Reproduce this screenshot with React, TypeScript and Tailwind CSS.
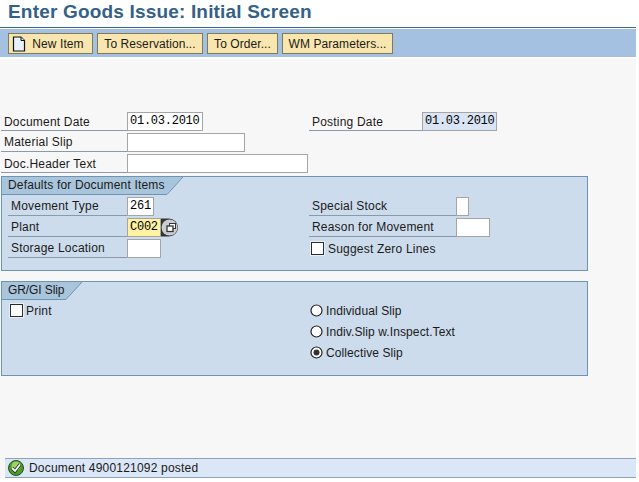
import type { ReactNode } from 'react';

const Field = ({ value = '', width, tone = 'bg-white' }: { value?: string; width: string; tone?: string }) => (
  <div className={`${width} ${tone} h-[19px] shrink-0 border border-[#a5a5a5] pl-[2px] font-['Liberation_Mono'] text-[12px] leading-[16px] tracking-[-0.25px] text-black`}>
    {value}
  </div>
);

const Row = ({ label, labelWidth, leading = 'leading-[20px]', children }: { label: string; labelWidth: string; leading?: string; children?: ReactNode }) => (
  <div className="flex h-[19px] items-start">
    <div className={`${labelWidth} ${leading} h-[19px] shrink-0 whitespace-nowrap border-b border-[#8a9aa8] pl-[3px] text-[12px] tracking-[0.2px] text-[#1a1a1a]`}>
      {label}
    </div>
    {children}
  </div>
);

const Checkbox = () => <div className="h-[13px] w-[13px] shrink-0 border border-[#2c2c2c] bg-white shadow-[0_0_0_1px_#e8eef5]" />;

const Radio = ({ checked = false }: { checked?: boolean }) => (
  <svg width="13" height="13" viewBox="0 0 13 13" className="shrink-0">
    <circle cx="6.5" cy="6.5" r="5.5" fill="#fff" stroke="#222" strokeWidth="1.2" />
    {checked && <circle cx="6.5" cy="6.5" r="3" fill="#333" />}
  </svg>
);

const Option = ({ label, checked }: { label: string; checked?: boolean }) => (
  <div className="flex h-[21px] items-center gap-[3px] pl-[1px] text-[12px] tracking-[0.1px] text-[#1a1a1a]">
    <Radio checked={checked} />
    <span>{label}</span>
  </div>
);

const ToolButton = ({ children, className }: { children: ReactNode; className: string }) => (
  <button className={`${className} flex h-[21px] items-center justify-center border border-[#7f7a5d] bg-[#f9e6ae] text-[12px] tracking-[0.08px] text-[#1a1a1a]`}>
    {children}
  </button>
);

const GroupTab = ({ title, className }: { title: string; className: string }) => (
  <div className="flex h-[18px] items-start">
    <div className={`${className} h-[18px] whitespace-nowrap border-b border-[#6f93b3] bg-[#a9c5dc] pl-[6px] text-[12px] leading-[16px] text-[#1a1a1a]`}>
      {title}
    </div>
    <svg width="17" height="18" viewBox="0 0 17 18" className="shrink-0">
      <polygon points="0,0 16,0 0,17" fill="#a9c5dc" />
      <line x1="0" y1="17.5" x2="16" y2="0" stroke="#6f93b3" />
    </svg>
  </div>
);

export default function App() {
  return (
    <div className="h-[482px] w-[639px] bg-white font-['Liberation_Sans',Arial,sans-serif]">
      <div className="flex h-[478px] w-[636px] flex-col bg-[#f7f7f7]">
        <div className="h-[28px] border-b border-[#3d6a85] bg-white pl-[8px] text-[19px] font-bold leading-[24px] tracking-[0.18px] text-[#346187]">
          Enter Goods Issue: Initial Screen
        </div>
        <div className="h-[1px] bg-white" />
        <div className="flex h-[28px] items-start gap-[4px] bg-[#a5c1e1] pl-[8px] pt-[4px]">
          <ToolButton className="w-[85px] pr-[5px]">
            <svg width="14" height="16" viewBox="0 0 14 16" className="mr-[6px] shrink-0">
              <path d="M1.5 1 H9 L12.5 4.5 V15 H1.5 Z" fill="#e8f1fa" stroke="#111" strokeWidth="1.2" />
              <path d="M9 1 V4.5 H12.5" fill="#cfe0f0" stroke="#111" />
            </svg>
            New Item
          </ToolButton>
          <ToolButton className="w-[106px]">To Reservation...</ToolButton>
          <ToolButton className="w-[71px]">To Order...</ToolButton>
          <ToolButton className="w-[111px]">WM Parameters...</ToolButton>
        </div>
        <div className="h-[2px] bg-white" />

        <div className="flex flex-col gap-[2px] pl-[1px] pt-[53px]">
          <div className="flex h-[19px]">
            <Row label="Document Date" labelWidth="w-[126px]">
              <Field value="01.03.2010" width="w-[76px]" />
            </Row>
            <div className="ml-[106px]">
              <Row label="Posting Date" labelWidth="w-[113px]">
                <Field value="01.03.2010" width="w-[75px]" tone="bg-[#d9e4f5]" />
              </Row>
            </div>
          </div>
          <Row label="Material Slip" labelWidth="w-[126px]" leading="leading-[19px]">
            <Field width="w-[118px]" />
          </Row>
          <Row label="Doc.Header Text" labelWidth="w-[126px]">
            <Field width="w-[181px]" />
          </Row>
        </div>

        <div className="ml-[1px] mt-[3px] h-[95px] w-[587px] border border-[#6f93b3] bg-[#cddcec]">
          <GroupTab title="Defaults for Document Items" className="w-[165px] tracking-[0.17px]" />
          <div className="flex pl-[6px] pt-[2px]">
            <div className="flex w-[300px] flex-col gap-[2px]">
              <Row label="Movement Type" labelWidth="w-[119px]" leading="leading-[18px]">
                <Field value="261" width="w-[27px]" />
              </Row>
              <Row label="Plant" labelWidth="w-[119px]" leading="leading-[18px]">
                <Field value="C002" width="w-[34px]" tone="bg-[#fff3a0]" />
                <svg width="18" height="19" viewBox="0 0 18 19" className="shrink-0">
                  <path d="M8 0.5 A9 9 0 0 1 8 18.5 H0 V0.5 Z" fill="#333" />
                  <circle cx="8.5" cy="9.5" r="8" fill="#c9ccd0" />
                  <rect x="8.5" y="5.5" width="6" height="5" fill="#fff" stroke="#333" />
                  <rect x="6" y="8" width="6" height="5.5" fill="#fff" stroke="#333" strokeWidth="1.3" />
                </svg>
              </Row>
              <Row label="Storage Location" labelWidth="w-[119px]" leading="leading-[18px]">
                <Field width="w-[34px]" />
              </Row>
            </div>
            <div className="flex flex-col gap-[2px] pl-[1px]">
              <Row label="Special Stock" labelWidth="w-[147px]" leading="leading-[18px]">
                <Field width="w-[13px]" />
              </Row>
              <Row label="Reason for Movement" labelWidth="w-[147px]" leading="leading-[18px]">
                <Field width="w-[34px]" />
              </Row>
              <div className="flex h-[19px] items-center gap-[4px] pl-[2px] text-[12px] tracking-[0.2px] text-[#1a1a1a]">
                <Checkbox />
                <span>Suggest Zero Lines</span>
              </div>
            </div>
          </div>
        </div>

        <div className="ml-[1px] mt-[10px] h-[95px] w-[587px] border border-[#6f93b3] bg-[#cddcec]">
          <GroupTab title="GR/GI Slip" className="w-[64px] tracking-[-0.1px]" />
          <div className="flex pl-[8px] pt-[1px]">
            <div className="flex h-[19px] w-[299px] items-center gap-[3px] text-[12px] tracking-[0.2px] text-[#1a1a1a]">
              <Checkbox />
              <span>Print</span>
            </div>
            <div className="-mt-[1px] flex flex-col">
              <Option label="Individual Slip" />
              <Option label="Indiv.Slip w.Inspect.Text" />
              <Option label="Collective Slip" checked />
            </div>
          </div>
        </div>

        <div className="mt-auto ml-[5px] flex h-[20px] items-center gap-[5px] border-y border-[#8ba3bc] bg-[#dbe6f6] pl-[3px] text-[12px] tracking-[0.2px] text-[#1a1a1a]">
          <svg width="16" height="16" viewBox="0 0 16 16" className="shrink-0">
            <circle cx="8" cy="8" r="7.5" fill="#4f9a2c" stroke="#26501a" />
            <circle cx="8" cy="6" r="4.5" fill="#9ad468" />
            <path d="M4 8 L7 11 L12 4.5" fill="none" stroke="#1d3d16" strokeWidth="3.4" />
            <path d="M4 8 L7 11 L12 4.5" fill="none" stroke="#fff" strokeWidth="1.8" />
          </svg>
          <span>Document 4900121092 posted</span>
        </div>
      </div>
    </div>
  );
}
